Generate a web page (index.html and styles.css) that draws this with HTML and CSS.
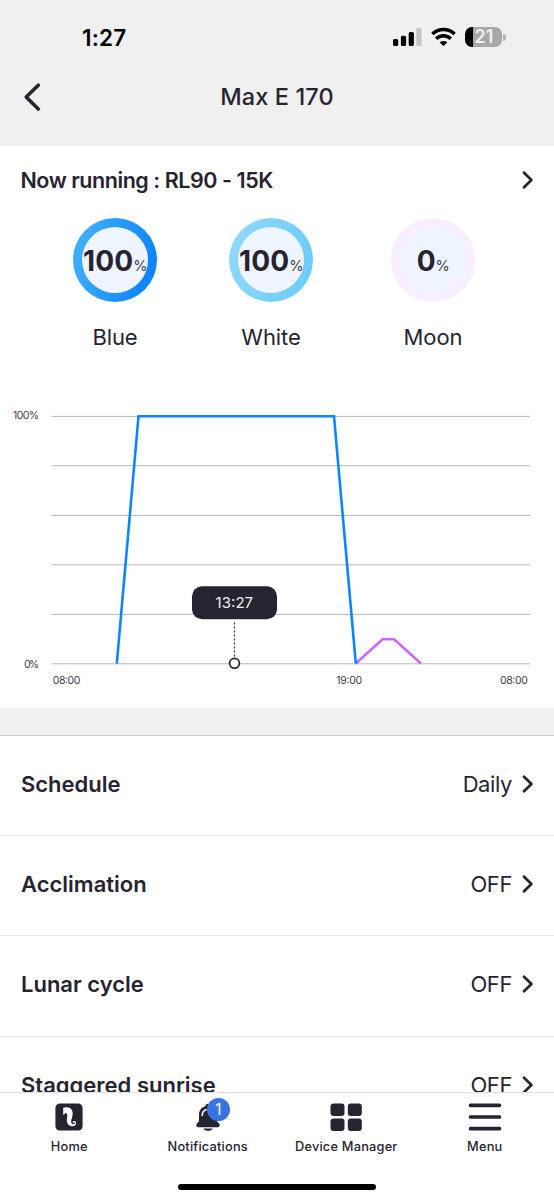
FILE: index.html
```html
<!DOCTYPE html>
<html lang="en">
<head>
<meta charset="utf-8">
<title>Max E 170</title>
<link rel="stylesheet" href="styles.css">
</head>
<body>
<div class="app">
  <header class="top">
    <div class="status">
      <span class="clock">1:27</span>
      <div class="indicators">
        <svg width="29" height="20" viewBox="0 0 29 20">
          <rect x="0" y="12" width="5.2" height="7" rx="1.5"/>
          <rect x="7.9" y="8.8" width="5.2" height="10.2" rx="1.5"/>
          <rect x="15.7" y="5" width="5.2" height="14" rx="1.5"/>
          <rect x="23.3" y="1" width="5.2" height="18" rx="1.5" fill="#c4c4c4"/>
        </svg>
        <svg class="wifi" width="25" height="20" viewBox="0 0 25 20">
          <path d="M1.4 7.1a15.8 15.8 0 0 1 22.2 0M5.2 11.7a10.3 10.3 0 0 1 14.6 0" fill="none" stroke="#000" stroke-width="3.5"/>
          <path d="M8.7 15.4a5.6 5.6 0 0 1 7.6 0L12.5 19z"/>
        </svg>
        <div class="battery"><span class="charge">21</span></div>
        <span class="terminal"></span>
      </div>
    </div>
    <div class="titlebar">
      <svg class="back" width="18" height="30" viewBox="0 0 18 30"><path d="M15.3 3.2 3.2 15l12.1 12"/></svg>
      <h1 class="title">Max E 170</h1>
    </div>
  </header>

  <main class="content">
    <section class="running">
      <h2 class="running-name">Now running : RL90 - 15K</h2>
      <svg class="chevron" width="12" height="18" viewBox="0 0 12 18"><path d="m2 1.8 7.4 7.2L2 16.2"/></svg>
    </section>

    <section class="channels">
      <div class="channel">
        <div class="ring ring-blue"><div class="disc"><b class="amount">100</b><span class="unit">%</span></div></div>
        <span class="channel-name">Blue</span>
      </div>
      <div class="channel">
        <div class="ring ring-white"><div class="disc"><b class="amount">100</b><span class="unit">%</span></div></div>
        <span class="channel-name">White</span>
      </div>
      <div class="channel">
        <div class="ring ring-moon"><div class="disc"><b class="amount">0</b><span class="unit">%</span></div></div>
        <span class="channel-name">Moon</span>
      </div>
    </section>

    <svg class="chart" width="554" height="300" viewBox="0 400 554 300">
      <g class="grid">
        <path d="M51.5 416.4H530M51.5 465.7H530M51.5 515.5H530M51.5 564.8H530M51.5 614.4H530M51.5 663.8H530"/>
      </g>
      <g class="axis">
        <text x="13" y="419.2" textLength="26">100%</text>
        <text x="24" y="667.8" textLength="15">0%</text>
        <text x="52.8" y="683.8" textLength="27.5">08:00</text>
        <text x="336.2" y="683.8" textLength="26">19:00</text>
        <text x="500" y="683.8" textLength="27.8">08:00</text>
      </g>
      <path class="line moon" d="M355.8 663.5 382.5 639.2H394L421 663.5"/>
      <path class="line blue" d="M116.8 663.6 138.5 416.3H334L355.8 663.6"/>
      <path class="stem" d="M234.5 622.5V657"/>
      <circle class="now" cx="234.5" cy="663.3" r="4.9"/>
      <rect x="192" y="586.3" width="85" height="33" rx="10" fill="#272431"/>
      <text class="tip" x="215.6" y="608.4" textLength="37.5">13:27</text>
    </svg>
    <div class="band"></div>

    <ul class="settings">
      <li class="setting"><span class="name">Schedule</span><span class="value">Daily</span><svg class="chevron" width="12" height="18" viewBox="0 0 12 18"><path d="m2 1.8 7.4 7.2L2 16.2"/></svg></li>
      <li class="setting"><span class="name">Acclimation</span><span class="value">OFF</span><svg class="chevron" width="12" height="18" viewBox="0 0 12 18"><path d="m2 1.8 7.4 7.2L2 16.2"/></svg></li>
      <li class="setting"><span class="name">Lunar cycle</span><span class="value">OFF</span><svg class="chevron" width="12" height="18" viewBox="0 0 12 18"><path d="m2 1.8 7.4 7.2L2 16.2"/></svg></li>
      <li class="setting"><span class="name">Staggered sunrise</span><span class="value">OFF</span><svg class="chevron" width="12" height="18" viewBox="0 0 12 18"><path d="m2 1.8 7.4 7.2L2 16.2"/></svg></li>
    </ul>
  </main>

  <nav class="tabs">
    <div class="tab">
      <svg width="28" height="28" viewBox="0 0 28 28">
        <rect x=".4" y=".4" width="27.2" height="27.2" rx="4.5" fill="#272431"/>
        <path d="M8.2 4.800c2.600-1 6.800-.6 8.300 1.600 1.600 2.300 1.300 4.900.7 7.400-.6 2.400-1.500 4.100-.9 5.900.6 1.600 2.400 2 3.300 1.100.7-.8.2-1.700-.7-1.500-.6.1-.7.600-.4.9-1.100-.2-1.200-1.500-.2-2 1.400-.7 2.900.2 2.800 2-.1 2.200-2.300 3.400-4.500 3-3.300-.5-5-3.100-4.700-6.400.3-2.500.8-4.500 0-5.900-.6-.9-1.200-1.100-1.800-.3-.4.9-1.200 1.300-1.900 1.100z" fill="#fff"/>
      </svg>
      <span class="tab-name">Home</span>
    </div>
    <div class="tab">
      <div class="bell">
        <svg width="28" height="28" viewBox="0 0 28 28">
          <path d="M14 .8c1.700 0 2.700 1 2.700 2.500 4.300 1.200 6.300 4.500 6.300 8.900v4.500c0 1.500.6 2.400 1.700 3.400.7.600 1 1.200 1 2.200 0 1.200-.8 1.900-1.900 1.900H4.200c-1.100 0-1.900-.7-1.900-1.900 0-1 .3-1.600 1-2.200 1.100-1 1.700-1.900 1.700-3.400v-4.500c0-4.400 2-7.700 6.300-8.900C11.300 1.800 12.300.8 14 .8z" fill="#272431"/>
          <path d="M9.300 25.400h9.400c-.8 1.500-2.500 2.300-4.700 2.300s-3.900-.8-4.700-2.300z" fill="#272431"/>
          <path d="M8.200 12.500c0-2.900 1.300-4.900 3.700-5.800" fill="none" stroke="#fff" stroke-width="1.600" stroke-linecap="round"/>
        </svg>
        <span class="badge">1</span>
      </div>
      <span class="tab-name">Notifications</span>
    </div>
    <div class="tab">
      <svg width="32" height="28" viewBox="0 0 32 28" fill="#272431">
        <rect x=".5" y=".6" width="14" height="12.300" rx="3"/><rect x="17.800" y=".6" width="14" height="12.300" rx="3"/>
        <rect x=".5" y="15.600" width="14" height="12.300" rx="3"/><rect x="17.800" y="15.600" width="14" height="12.300" rx="3"/>
      </svg>
      <span class="tab-name">Device Manager</span>
    </div>
    <div class="tab">
      <svg width="34" height="28" viewBox="0 0 34 28" fill="none" stroke="#272431" stroke-width="3.700" stroke-linecap="round">
        <path d="M2.500 2.300h29M2.500 14h29M2.500 25.700h29"/>
      </svg>
      <span class="tab-name">Menu</span>
    </div>
    <div class="home-bar"></div>
  </nav>
</div>
</body>
</html>
```

FILE: styles.css
```css
* { box-sizing: border-box; }

body {
  margin: 0;
  font-family: Inter, "Liberation Sans", sans-serif;
  color: #272431;
  background: #fff;
}

.app {
  display: flex;
  flex-direction: column;
  height: 1200px;
  overflow: hidden;
}

.top {
  flex: none;
  height: 146px;
  background: #f0f0f0;
}

.status {
  display: flex;
  justify-content: space-between;
  height: 69px;
  padding: 24px 48.5px 0 82px;
}

.clock {
  font-size: 22.5px;
  line-height: 28px;
  font-weight: 600;
  letter-spacing: .2px;
  color: #000;
}

.indicators { display: flex; padding-top: 3px; }
.wifi { margin-left: 9px; }

.battery {
  display: flex;
  align-items: center;
  width: 37px;
  height: 20px;
  margin-left: 9px;
  padding-left: 9.5px;
  border-radius: 7px;
  background: linear-gradient(90deg, #000 8px, #a8a8a8 8px);
}

.charge {
  font-size: 18px;
  line-height: 20px;
  font-weight: 600;
  color: #f0f0f0;
}

.terminal {
  width: 2.5px;
  height: 7px;
  margin: 7px 0 0 1px;
  border-radius: 0 3px 3px 0;
  background: #b4b4b4;
}

.titlebar {
  display: grid;
  grid-template-columns: 20px 1fr 20px;
  align-items: center;
  height: 56px;
  padding: 0 23px;
}

.title {
  margin: 0;
  padding-bottom: 1px;
  font-size: 23.5px;
  font-weight: 500;
  letter-spacing: .1px;
  text-align: center;
}

.back path, .chevron path {
  fill: none;
  stroke: #272431;
  stroke-linecap: round;
  stroke-linejoin: round;
}
.back path { stroke-width: 3.6; }
.chevron { flex: none; }
.chevron path { stroke-width: 2.7; }

.content {
  flex: none;
  height: 946px;
  overflow: hidden;
}

.running {
  display: flex;
  align-items: center;
  justify-content: space-between;
  height: 68px;
  padding: 0 20px 0 20.5px;
}

.running-name {
  margin: 0;
  font-size: 21.5px;
  font-weight: 600;
  letter-spacing: -.45px;
}

.channels {
  display: grid;
  grid-template-columns: 84px 84px 84px;
  column-gap: 72px;
  height: 186px;
  padding: 4px 0 0 73px;
}

.channel {
  display: flex;
  flex-direction: column;
  align-items: center;
  gap: 20px;
}
.channel:last-child { transform: translateX(6px); }

.ring {
  flex: none;
  width: 84px;
  height: 84px;
  padding: 9px;
  border-radius: 50%;
}
.ring-blue { background: linear-gradient(105deg, #46b4fd, #077dfd); }
.ring-white { background: linear-gradient(105deg, #93d9fb, #68cbfa); }
.ring-moon { background: #f9eefe; }

.disc {
  display: flex;
  align-items: baseline;
  justify-content: center;
  height: 66px;
  border-radius: 50%;
  background: #eff5fe;
  line-height: 68px;
  white-space: nowrap;
}

.amount {
  font-size: 28px;
  font-weight: 700;
  letter-spacing: .1px;
}
.unit {
  font-size: 14.5px;
  letter-spacing: -.5px;
  color: #403e49;
}

.channel-name {
  font-size: 22px;
  line-height: 30px;
  letter-spacing: -.1px;
}

.chart { display: block; }
.grid path { fill: none; stroke: #b8b8b8; stroke-width: 1; }
.axis text { font-size: 10.5px; fill: #403e49; }
.line { fill: none; stroke-width: 2.6; stroke-linejoin: miter; }
.blue { stroke: #0b86ff; }
.moon { stroke: #cb68f5; }
.stem { stroke: #272431; stroke-width: 1.2; stroke-dasharray: 2 2; }
.now { fill: #fff; stroke: #272431; stroke-width: 1.8; }
.tip { font-size: 15px; fill: #eee; }

.band {
  height: 28px;
  margin-top: 8px;
  border-bottom: 1px solid #cfcfcf;
  background: #f0f0f0;
}

.settings {
  margin: 0;
  padding: 0;
  list-style: none;
}

.setting {
  display: flex;
  align-items: center;
  height: 100.2px;
  padding: 0 20px 3px 21px;
  border-bottom: 1px solid #e3e3e5;
  font-size: 22px;
}
.setting:first-child { border-bottom-color: #ebebed; }

.name {
  flex: 1;
  font-weight: 600;
  letter-spacing: 0;
}
.value {
  margin-right: 10px;
  letter-spacing: -.4px;
}

.tabs {
  flex: none;
  display: grid;
  grid-template-columns: repeat(4, 138.5px);
  grid-template-rows: 83px auto;
  height: 108px;
  border-top: 1px solid #e0e0e3;
  background: #fff;
}

.tab {
  display: flex;
  flex-direction: column;
  align-items: center;
  gap: 6px;
  padding-top: 10px;
}

.tab-name {
  font-size: 12.8px;
  line-height: 20px;
  font-weight: 500;
  letter-spacing: .2px;
}

.bell { position: relative; height: 28px; }
.badge {
  position: absolute;
  left: 13px;
  top: -5px;
  width: 23px;
  height: 23px;
  border-radius: 50%;
  background: #3873e3;
  color: #fff;
  font-size: 16px;
  line-height: 23px;
  text-align: center;
}

.home-bar {
  grid-column: 1 / -1;
  justify-self: center;
  width: 198px;
  height: 6px;
  margin-top: 7.5px;
  border-radius: 3px;
  background: #000;
}
```
